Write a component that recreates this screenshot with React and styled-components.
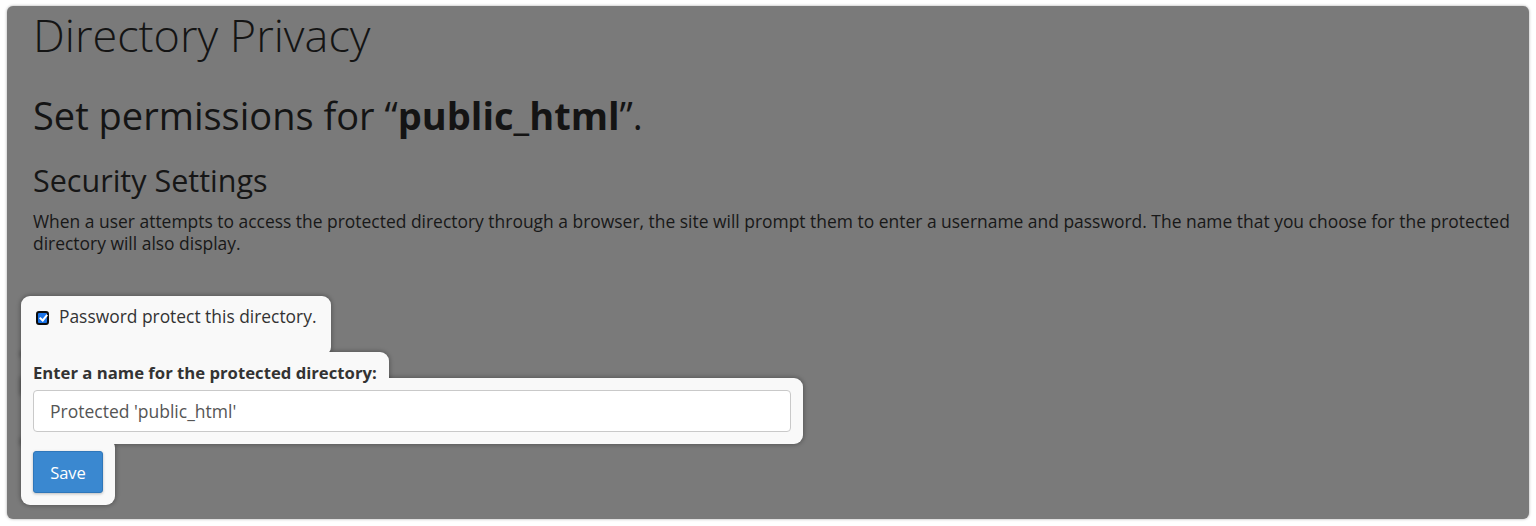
import React from "react";
import styled, { createGlobalStyle, css } from "styled-components";

const GlobalStyle = createGlobalStyle`
    body {
        margin: 0;
        background: #ffffff;
        font-family: "Open Sans", "Liberation Sans", sans-serif;
    }
    * {
        box-sizing: border-box;
    }
`;

// The lit-up part of a guided tour: a light plate drawn behind the element,
// 12px wider on every side, with all shadows kept under all plates.
// Plates that touch the one above / below get a square corner on that side
// so the stacked plates read as one shape.
const spotlight = css`
    position: relative;
    &::before,
    &::after {
        content: "";
        position: absolute;
        inset: -12px;
        border-radius: 9px;
        ${props => props.$joinTop && "border-top-left-radius: 0;"}
        ${props => props.$joinBottom && "border-bottom-left-radius: 0;"}
    }
    &::before {
        z-index: -2;
        box-shadow: 0 0 4px 1px rgba(0, 0, 0, 0.28);
    }
    &::after {
        z-index: -1;
        background: #f9f9f9;
    }
`;

const Page = styled.div`
    padding: 6px 7px 7px 7px;
`;

const Panel = styled.div`
    position: relative;
    z-index: 0;
    height: 513px;
    padding: 4px 4px 0 26px;
    background: #7a7a7a;
    border-radius: 6px;
    box-shadow: 0 0 3px rgba(0, 0, 0, 0.35);
    color: #181818;
`;

const Title = styled.h1`
    margin: 0;
    font-size: 45px;
    font-weight: 300;
    line-height: 50px;
    color: #141414;
`;

const Subtitle = styled.h2`
    margin: 34px 0 0;
    font-size: 38px;
    font-weight: 400;
    line-height: 42px;
    color: #141414;
    strong {
        font-weight: 700;
    }
`;

const Section = styled.h3`
    margin: 27px 0 0;
    font-size: 30.5px;
    font-weight: 400;
    line-height: 34px;
    color: #161616;
`;

const Intro = styled.p`
    margin: 13px 0 0;
    font-size: 17.45px;
    line-height: 22px;
    color: #181818;
`;

const Form = styled.form`
    display: flex;
    flex-direction: column;
    align-items: flex-start;
    margin-top: 54px;
`;

const CheckRow = styled.label`
    ${spotlight};
    display: inline-flex;
    align-items: flex-start;
    gap: 10px;
    height: 36px;
    padding: 0 3px;
    font-size: 17.4px;
    line-height: 16px;
    color: #333333;
`;

const Check = styled.input`
    appearance: none;
    position: relative;
    flex: none;
    width: 13px;
    height: 14px;
    margin: 3px 0 0;
    border: 2px solid #0d0d0d;
    border-radius: 3px;
    background: #1a73e8;
    &::after {
        content: "";
        position: absolute;
        left: 2.5px;
        top: 0px;
        width: 3px;
        height: 6px;
        border: solid #ffffff;
        border-width: 0 2px 2px 0;
        transform: rotate(40deg);
    }
`;

const FieldLabel = styled.label`
    ${spotlight};
    display: inline-block;
    margin-top: 20px;
    font-size: 16.7px;
    font-weight: 700;
    line-height: 18px;
    color: #333333;
`;

const InputWrap = styled.div`
    ${spotlight};
    width: 758px;
    margin-top: 8px;
`;

const TextInput = styled.input`
    display: block;
    width: 100%;
    height: 42px;
    padding: 0 16px;
    border: 1px solid #c9c9c9;
    border-radius: 4px;
    background: #ffffff;
    font-family: inherit;
    font-size: 17.5px;
    color: #555555;
`;

const ButtonWrap = styled.div`
    ${spotlight};
    margin-top: 19px;
`;

const SaveButton = styled.button`
    display: block;
    width: 70px;
    height: 42px;
    border: 1px solid #2f77ba;
    border-radius: 3px;
    background: #3a88d0;
    box-shadow: 0 1px 3px rgba(0, 0, 0, 0.25);
    font-family: inherit;
    font-size: 16.5px;
    color: #ffffff;
`;

function App() {
    return (
        <Page>
            <GlobalStyle />
            <Panel>
                <Title>Directory Privacy</Title>
                <Subtitle>
                    Set permissions for “<strong>public_html</strong>”.
                </Subtitle>
                <Section>Security Settings</Section>
                <Intro>
                    When a user attempts to access the protected directory through a browser,
                    the site will prompt them to enter a username and password. The name that
                    you choose for the protected directory will also display.
                </Intro>
                <Form onSubmit={e => e.preventDefault()}>
                    <CheckRow $joinBottom>
                        <Check type="checkbox" defaultChecked />
                        Password protect this directory.
                    </CheckRow>
                    <FieldLabel htmlFor="realm" $joinTop $joinBottom>
                        Enter a name for the protected directory:
                    </FieldLabel>
                    <InputWrap $joinTop $joinBottom>
                        <TextInput id="realm" type="text" defaultValue="Protected 'public_html'" />
                    </InputWrap>
                    <ButtonWrap $joinTop>
                        <SaveButton type="submit">Save</SaveButton>
                    </ButtonWrap>
                </Form>
            </Panel>
        </Page>
    );
}

export default App;
